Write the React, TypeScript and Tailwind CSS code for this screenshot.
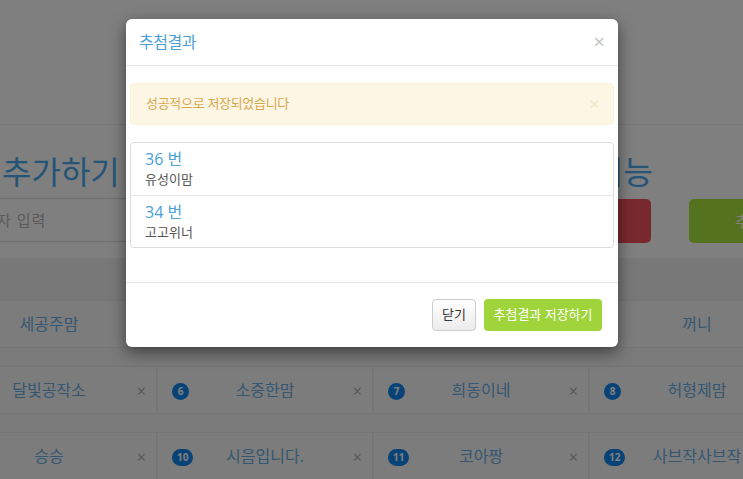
const font = "font-['Open_Sans','Noto_Sans_CJK_KR',sans-serif]";

type Cell = { no?: number; name: string; close?: boolean };

// row 1 cols 2-3 sit under the modal, so they stay empty
const rows: Cell[][] = [
  [{ name: "세공주맘" }, { name: "" }, { name: "" }, { name: "꺼니" }],
  [
    { no: 5, name: "달빛공작소", close: true },
    { no: 6, name: "소중한맘", close: true },
    { no: 7, name: "희동이네", close: true },
    { no: 8, name: "허형제맘", close: true },
  ],
  [
    { no: 9, name: "승승", close: true },
    { no: 10, name: "시음입니다.", close: true },
    { no: 11, name: "코아짱", close: true },
    { no: 12, name: "사브작사브작", close: true },
  ],
];

function NameCell({ cell }: { cell: Cell }) {
  return (
    <div className="relative h-[48px] flex items-center justify-center border border-[#ebebeb] bg-[#f8f8f8]">
      {cell.no !== undefined && cell.close && (
        <span className="absolute left-[14px] top-[16px] h-[17px] min-w-[17px] px-[5px] rounded-full bg-[#0e86ec] text-white text-[10px] font-bold leading-[17px] text-center">
          {cell.no}
        </span>
      )}
      {cell.name && <span className="text-[16px] leading-[20px] text-[#6aaee4]">{cell.name}</span>}
      {cell.close && (
        <span className="absolute right-[10px] top-[14px] text-[16px] leading-[20px] text-[#b0b0b0]">×</span>
      )}
    </div>
  );
}

function Page() {
  return (
    <div className="w-[743px] h-[479px] overflow-hidden bg-white">
      <div className="h-[125px] border-b border-[#eeeeee]" />
      <div className="flex pt-[27px]">
        <div className="w-[560px] shrink-0">
          <h2 className="pl-[2px] text-[32px] leading-[40px] text-[#4aa8ee]">추가하기</h2>
          <div className="mt-[6px] h-[44px] border-y border-[#dddddd] flex items-center text-[15px] text-[#b4b4b4] -ml-[3px] tracking-[1px]">
            자 입력
          </div>
        </div>
        <div className="flex-1">
          <h2 className="pl-[34px] text-[32px] leading-[40px] text-[#4aa8ee]">기능</h2>
          <div className="mt-[7px] flex gap-[38px]">
            <div className="w-[91px] h-[44px] rounded-[5px] bg-[#f2525c]" />
            <div className="w-[120px] h-[44px] rounded-[5px] bg-[#aae63c] flex items-center pl-[46px] text-[15px] text-white whitespace-nowrap">
              추첨
            </div>
          </div>
        </div>
      </div>
      <div className="mt-[15px] h-[42px] bg-[#f1f1f1]" />
      <div className="bg-[#f4f4f4] pb-[10px]">
        <div className="-ml-[59px] grid grid-cols-[216px_216px_216px_216px] gap-y-[18px]">
          {rows.map((r, i) => r.map((c, j) => <NameCell key={`${i}-${j}`} cell={c} />))}
        </div>
      </div>
    </div>
  );
}

function ResultModal() {
  const picks = [
    { no: 36, name: "유성이맘" },
    { no: 34, name: "고고위너" },
  ];
  return (
    <div className="absolute left-[126px] top-[19px] w-[492px] bg-white rounded-[6px] shadow-[0_5px_15px_rgba(0,0,0,0.5)]">
      <div className="h-[47px] flex items-center justify-between pl-[13px] pr-[13px] border-b border-[#e5e5e5]">
        <h4 className="text-[16px] leading-[24px] text-[#4a9fd6] tracking-[-0.5px]">추첨결과</h4>
        <span className="text-[20px] leading-[20px] text-[#c4c4c4]">×</span>
      </div>
      <div className="px-[4px] pt-[17px] pb-[34px]">
        <div className="h-[42px] flex items-center justify-between pl-[15px] pr-[14px] rounded-[4px] bg-[#fdf6e4] border border-[#fcf0d6]">
          <span className="text-[13px] text-[#d6a84e] tracking-[-0.3px]">성공적으로 저장되었습니다</span>
          <span className="text-[16px] leading-[16px] text-[#f0e2c4]">×</span>
        </div>
        <div className="mt-[17px] border border-[#dddddd] rounded-[4px]">
          {picks.map((p, i) => (
            <div
              key={p.no}
              className={`h-[52px] pl-[14px] pt-[6px] ${i > 0 ? "border-t border-[#e6e6e6]" : ""}`}
            >
              <div className="text-[16px] leading-[20px] text-[#4a9fd6]">{p.no} 번</div>
              <div className="text-[13px] leading-[20px] text-[#555555]">{p.name}</div>
            </div>
          ))}
        </div>
      </div>
      <div className="border-t border-[#e5e5e5] pt-[16px] pb-[16px] pr-[16px] flex justify-end gap-[8px]">
        <button className="h-[32px] w-[44px] px-0 rounded-[4px] border border-[#cccccc] bg-gradient-to-b from-white to-[#ececec] text-[13px] text-[#333333] whitespace-nowrap">
          닫기
        </button>
        <button className="h-[32px] w-[118px] px-0 rounded-[4px] bg-[#9fd43a] text-[13px] text-white whitespace-nowrap">
          추첨결과 저장하기
        </button>
      </div>
    </div>
  );
}

export default function App() {
  return (
    <div className={`relative w-[743px] h-[479px] overflow-hidden ${font}`}>
      <Page />
      <div className="absolute inset-0 bg-black/50" />
      <ResultModal />
    </div>
  );
}
